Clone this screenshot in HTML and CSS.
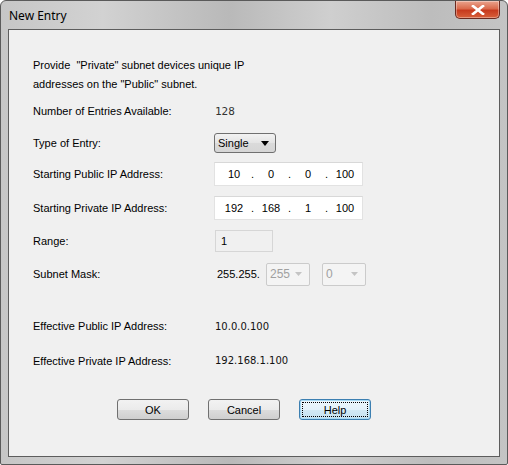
FILE: index.html
```html
<!DOCTYPE html>
<html>
<head>
<meta charset="utf-8">
<link rel="stylesheet" href="styles.css">
</head>
<body>
<div class="window">
  <div class="titlebar">
    <span class="title">New Entry</span>
    <div class="close"><svg width="14" height="10" viewBox="0 0 14 10"><path d="M2 1 L12 9 M12 1 L2 9" stroke="#fff" stroke-width="2.6" stroke-linecap="square"/></svg></div>
  </div>
  <div class="panel">
    <p class="intro">Provide &nbsp;"Private" subnet devices unique IP<br>addresses on the "Public" subnet.</p>
    <div class="row r-num"><span class="label">Number of Entries Available:</span><span class="mono">128</span></div>
    <div class="row r-type"><span class="label">Type of Entry:</span>
      <div class="combo"><span>Single</span><svg width="8" height="5" viewBox="0 0 8 5"><path d="M0 0H8L4 5Z" fill="#000"/></svg></div>
    </div>
    <div class="row r-pub"><span class="label">Starting Public IP Address:</span>
      <div class="ipfield"><span class="seg">10</span><span class="dot">.</span><span class="seg">0</span><span class="dot">.</span><span class="seg">0</span><span class="dot">.</span><span class="seg">100</span></div>
    </div>
    <div class="row r-priv"><span class="label">Starting Private IP Address:</span>
      <div class="ipfield"><span class="seg">192</span><span class="dot">.</span><span class="seg">168</span><span class="dot">.</span><span class="seg">1</span><span class="dot">.</span><span class="seg">100</span></div>
    </div>
    <div class="row r-range"><span class="label">Range:</span>
      <div class="rangefield">1</div>
    </div>
    <div class="row r-mask"><span class="label">Subnet Mask:</span>
      <span class="maskpre">255.255.</span>
      <div class="dcombo"><span>255</span><svg width="7" height="4" viewBox="0 0 7 4"><path d="M0 0H7L3.5 4Z" fill="#c4c4c4"/></svg></div>
      <div class="dcombo second"><span>0</span><svg width="7" height="4" viewBox="0 0 7 4"><path d="M0 0H7L3.5 4Z" fill="#c4c4c4"/></svg></div>
    </div>
    <div class="row r-epub"><span class="label">Effective Public IP Address:</span><span class="val">10.0.0.100</span></div>
    <div class="row r-epriv"><span class="label">Effective Private IP Address:</span><span class="val up">192.168.1.100</span></div>
    <div class="buttons">
      <button class="btn">OK</button>
      <button class="btn">Cancel</button>
      <button class="btn focus"><span class="focusring">Help</span></button>
    </div>
  </div>
</div>
</body>
</html>
```

FILE: styles.css
```css
html, body {
  margin: 0;
  padding: 0;
  background: #fff;
}
.window {
  width: 508px;
  height: 465px;
  box-sizing: border-box;
  border: 1px solid #5a5a5a;
  border-radius: 6px 6px 2px 2px;
  background: linear-gradient(90deg, #c6c6c6 0%, #d2d2d2 20%, #b9b9b9 45%, #cfcfcf 65%, #bdbdbd 85%, #c4c4c4 100%);
  display: flex;
  flex-direction: column;
  font-family: "Liberation Sans", Arial, sans-serif;
  font-size: 11px;
  color: #000;
  overflow: hidden;
}
.titlebar {
  height: 28px;
  display: flex;
  align-items: flex-start;
  justify-content: space-between;
  padding-left: 8px;
  padding-right: 7px;
}
.title {
  font-family: "Noto Sans", "Liberation Sans", sans-serif;
  font-size: 12px;
  margin-top: 6px;
  color: #000;
}
.close {
  width: 45px;
  height: 18px;
  box-sizing: border-box;
  border: 1px solid #6b2a20;
  border-top: none;
  border-radius: 0 0 5px 5px;
  background: linear-gradient(#eaa48e 0%, #da6a4c 45%, #c73a1e 55%, #d8603a 100%);
  display: flex;
  align-items: center;
  justify-content: center;
  box-shadow: inset 0 0 0 1px rgba(255,255,255,0.35);
}
.panel {
  margin: 0 7px;
  height: 428px;
  box-sizing: border-box;
  border: 1px solid #5d5d5d;
  background: #f0f0f0;
  padding-left: 24px;
  display: flex;
  flex-direction: column;
}
.intro {
  margin: 26px 0 0 0;
  line-height: 19px;
}
.row {
  display: flex;
  align-items: center;
}
.label {
  width: 181px;
  flex: none;
}
.r-num { height: 34px; }
.r-type { height: 30px; }
.r-pub { height: 32px; }
.r-priv { height: 36px; }
.r-range { height: 30px; }
.r-mask { height: 36px; }
.r-epub { height: 36px; margin-top: 16px; }
.r-epriv { height: 34px; }
.mono {
  font-family: "DejaVu Sans Mono", monospace;
  font-size: 11px;
  color: #333;
  margin-left: 1px;
}
.val {
  font-family: "DejaVu Sans", sans-serif;
  font-size: 10px;
  color: #111;
  margin-left: 1px;
}
.val.up { position: relative; top: -1px; }
.combo {
  width: 62px;
  height: 20px;
  box-sizing: border-box;
  border: 1px solid #707070;
  border-radius: 3px;
  background: linear-gradient(#f2f2f2, #e4e4e4 50%, #dadada 51%, #d6d6d6);
  display: flex;
  align-items: center;
  justify-content: space-between;
  padding: 0 6px 0 3px;
}
.ipfield {
  width: 149px;
  height: 24px;
  box-sizing: border-box;
  border: 1px solid #e2e2e2;
  border-top-color: #d8d8d8;
  background: #fff;
  display: flex;
  align-items: center;
  padding-left: 5px;
}
.seg {
  width: 28px;
  text-align: center;
}
.dot {
  width: 9px;
  text-align: center;
}
.rangefield {
  width: 58px;
  height: 22px;
  margin-left: 1px;
  box-sizing: border-box;
  border: 1px solid #d6d6d6;
  background: #f0f0f0;
  display: flex;
  align-items: center;
  padding-left: 5px;
}
.maskpre {
  margin-left: 3px;
  width: 49px;
}
.dcombo {
  width: 44px;
  height: 23px;
  box-sizing: border-box;
  border: 1px solid #cbcbcb;
  border-radius: 2px;
  background: #f4f4f4;
  color: #a0a0a0;
  display: flex;
  align-items: center;
  justify-content: space-between;
  padding: 0 7px 0 3px;
  font-size: 12px;
}
.dcombo.second { margin-left: 12px; }
.buttons {
  display: flex;
  margin-top: 21px;
  padding-left: 84px;
  gap: 19px;
}
.btn {
  width: 72px;
  height: 21px;
  box-sizing: border-box;
  border: 1px solid #707070;
  border-radius: 3px;
  background: linear-gradient(#f2f2f2, #ebebeb 50%, #dddddd 51%, #cfcfcf);
  font-family: "Liberation Sans", Arial, sans-serif;
  font-size: 11px;
  color: #000;
  padding: 0;
  margin: 0;
  display: flex;
  align-items: center;
  justify-content: center;
}
.btn.focus {
  border-color: #3c7fb1;
  box-shadow: inset 0 0 0 1px #a8daf4;
  padding: 2px;
  background: linear-gradient(#eef7fc, #e3f1f9 50%, #d2e9f5 51%, #c6e2f1);
}
.focusring {
  flex: 1;
  height: 100%;
  box-sizing: border-box;
  border: 1px dotted #000;
  display: flex;
  align-items: center;
  justify-content: center;
}
```
